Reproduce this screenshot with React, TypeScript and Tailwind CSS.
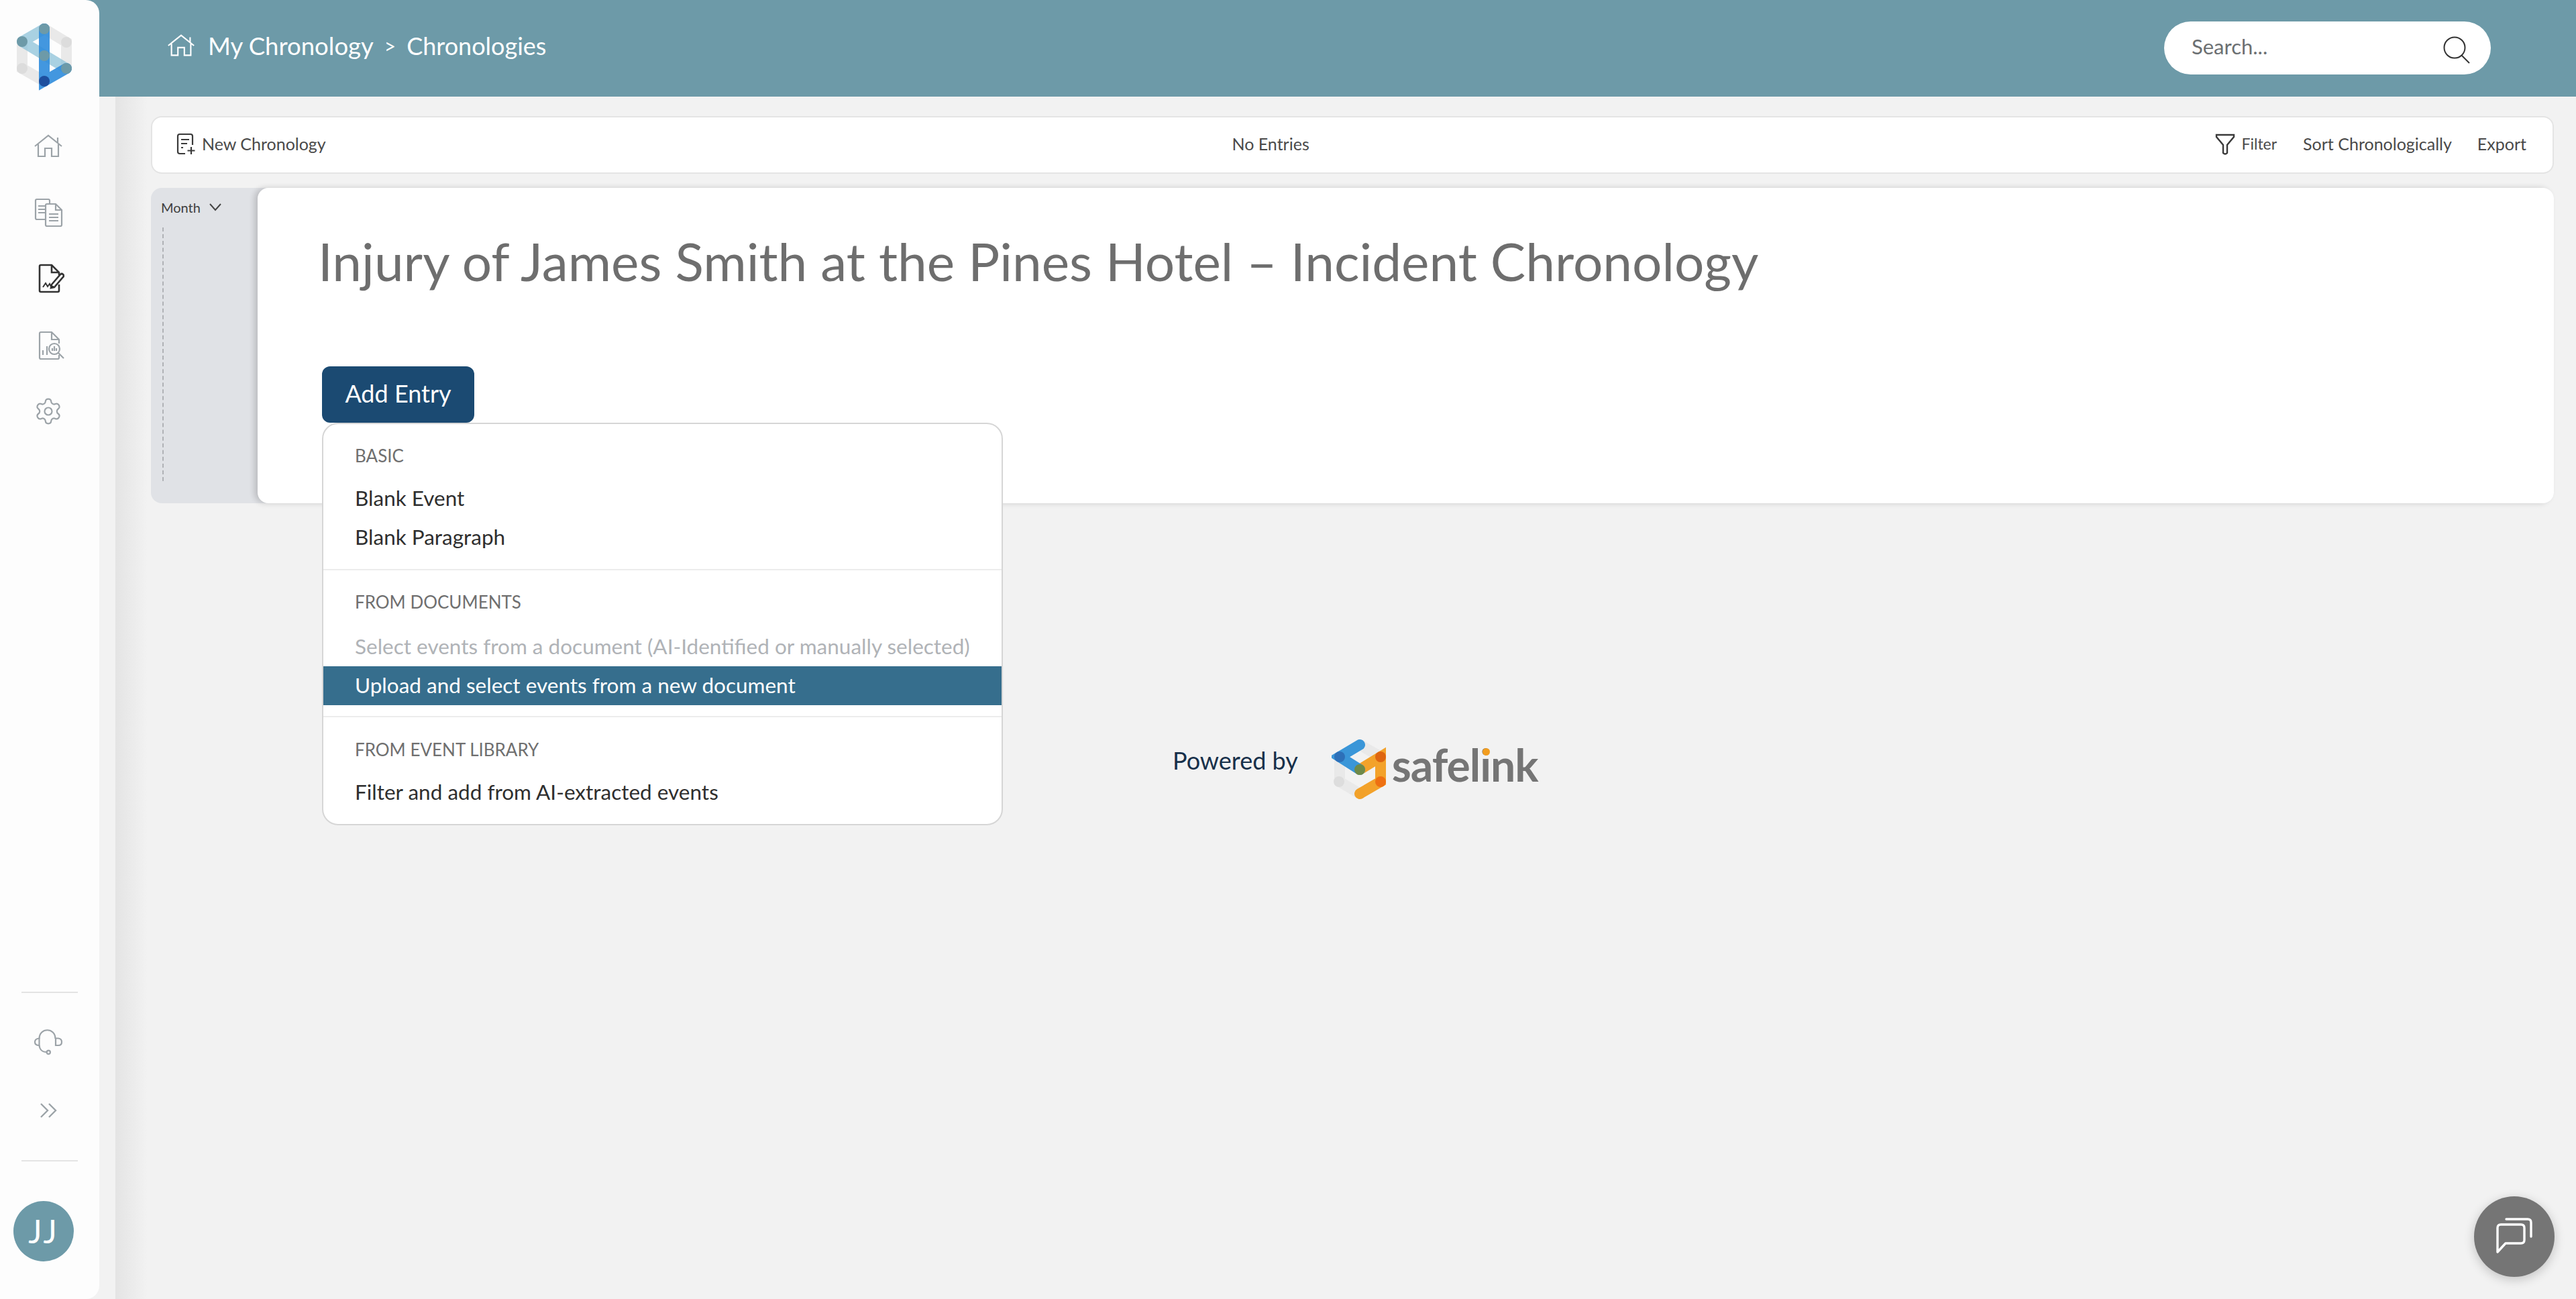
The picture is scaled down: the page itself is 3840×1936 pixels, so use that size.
import { Settings } from "lucide-react";

const FONT = "font-['Lato','Noto_Sans',sans-serif]";

function BrandLogo() {
  return (
    <svg width="130" height="150" viewBox="0 0 130 150" fill="none" strokeLinecap="round" className="mt-[17px] ml-[2px]">
      <g strokeWidth="16">
        <path d="M64 26 L97 46 V85 M31 45 V85 L64 104" stroke="#d9d9d9" strokeOpacity="0.55" />
        <path d="M31 45 L64 26 M31 45 L97 85" stroke="#8cc1d8" strokeOpacity="0.75" />
        <path d="M64 26 V104 L97 85" stroke="#2f8cdc" strokeOpacity="0.9" />
      </g>
      <circle cx="64" cy="26" r="8" fill="#6d9aa8" />
      <circle cx="31" cy="45" r="8" fill="#6d9aa8" />
      <circle cx="64" cy="66" r="8" fill="#6d9aa8" />
      <circle cx="97" cy="85" r="8" fill="#6d9aa8" />
      <circle cx="64" cy="104" r="8" fill="#1e4f9e" />
      <circle cx="97" cy="46" r="8" fill="#dcdcdc" />
      <circle cx="31" cy="85" r="8" fill="#dcdcdc" />
    </svg>
  );
}

function HomeIcon({ className }: { className?: string }) {
  return (
    <svg viewBox="0 0 48 48" fill="none" stroke="currentColor" strokeWidth="2.2" className={className}>
      <path d="M4 24 L24 8 L44 24 M38 11 V19 M9 21 V39 H19 V27 H29 V39 H39 V21" />
    </svg>
  );
}

function DocsIcon() {
  return (
    <svg viewBox="0 0 48 48" fill="none" stroke="#9ca3a8" strokeWidth="2.2" className="w-[48px] h-[48px]">
      <path d="M20 34 H7 Q5 34 5 32 V6 Q5 4 7 4 H24 Q26 4 26 6 V10" />
      <path d="M9 14 H20 M9 19 H20 M9 24 H20" />
      <path d="M22 11 H35 L44 20 V42 Q44 44 42 44 H22 Q20 44 20 42 V13 Q20 11 22 11 Z M35 11 V20 H44" />
      <path d="M25 26 H39 M25 31 H39 M25 36 H39" />
    </svg>
  );
}

function SignIcon() {
  return (
    <svg viewBox="0 0 48 48" fill="none" stroke="#333333" strokeWidth="2.6" className="w-[48px] h-[48px]">
      <path d="M40 32 V41 Q40 43 38 43 H13 Q11 43 11 41 V5 Q11 3 13 3 H29 L40 14 V18 M29 3 V14 H40" />
      <path d="M16 36 L20 30 L23 35 L26 31 L28 35 H32" strokeWidth="2" />
      <path d="M29 32 L42 17 Q44 15 46 17 Q48 19 46 21 L33 36 L28 37 Z" />
    </svg>
  );
}

function ReportIcon() {
  return (
    <svg viewBox="0 0 48 48" fill="none" stroke="#9ca3a8" strokeWidth="2.2" className="w-[48px] h-[48px] mt-[2px]">
      <path d="M40 37 V41 Q40 43 38 43 H13 Q11 43 11 41 V5 Q11 3 13 3 H29 L40 14 V20 M29 3 V14 H40" />
      <path d="M16 37 V30 M22 37 V24" />
      <circle cx="33" cy="28" r="8" />
      <path d="M30 31 V27 M33 31 V24 M36 31 V27 M39 34 L47 42" />
    </svg>
  );
}

function HeadsetIcon() {
  return (
    <svg viewBox="0 0 48 48" fill="none" stroke="#9ca3a8" strokeWidth="2.2" className="w-[48px] h-[48px]">
      <path d="M10.5 19 C10.5 2 34.5 2 34.5 19" />
      <path d="M10.5 18.5 Q4 19 4 24 Q4 29 10.5 29 Z M35 18.5 H39 Q44 19 44 24 Q44 29 39 29 H35 Z" />
      <path d="M10.5 29 C11 35 15 39 21.5 39" />
      <circle cx="24.3" cy="39.3" r="2.6" />
    </svg>
  );
}

function ChevronsIcon() {
  return (
    <svg viewBox="0 0 48 48" fill="none" stroke="#9ca3a8" strokeWidth="2.4" className="w-[48px] h-[48px]">
      <path d="M13 14 L23 24 L13 34 M25 14 L35 24 L25 34" />
    </svg>
  );
}

function SafelinkLogo() {
  return (
    <div className="flex items-center">
      <svg width="84" height="96" viewBox="0 0 84 96" fill="none" strokeLinecap="round">
        <g strokeWidth="16">
          <path d="M42 10 L73 28 M12 28 V65 L42 83" stroke="#e2e2e2" strokeOpacity="0.6" />
          <path d="M42 47 L73 28 V65 L42 83" stroke="#f29d1f" strokeOpacity="0.95" />
          <path d="M42 10 L12 28 L42 47" stroke="#3a96d8" />
        </g>
        <circle cx="12" cy="28" r="8" fill="#2d70b8" />
        <circle cx="42" cy="47" r="8" fill="#6f8a48" />
        <circle cx="73" cy="28" r="8" fill="#de6510" />
        <circle cx="73" cy="65" r="8" fill="#ee7012" />
        <circle cx="11" cy="65" r="8" fill="#dddddd" />
      </svg>
      <span className="relative ml-[6px] text-[66px] leading-none font-bold tracking-[-1px] text-[#757575] -mt-[16px]">
        safelink
        <span className="absolute left-[135px] top-[8px] w-[11px] h-[11px] rounded-full bg-[#f29d1f]" />
      </span>
    </div>
  );
}

function MenuItem({ label, className }: { label: string; className?: string }) {
  return <div className={`h-[58px] flex items-center px-[47px] text-[31.5px] ${className ?? "text-[#2f2f2f]"}`}>{label}</div>;
}

function MenuHeading({ label }: { label: string }) {
  return <div className="h-[58px] flex items-center px-[47px] text-[26px] text-[#6f6f6f]">{label}</div>;
}

export default function App() {
  return (
    <div className={`${FONT} flex h-screen w-full overflow-hidden bg-[#f2f2f2] relative`}>
      {/* Sidebar */}
      <aside className="relative z-10 w-[148px] shrink-0 flex flex-col bg-[#fdfdfd] rounded-r-[20px]">
        <div className="h-[168px] shrink-0">
          <BrandLogo />
        </div>
        <nav className="flex flex-col pr-[4px]">
          <div className="h-[99px] flex items-center justify-center"><HomeIcon className="w-[48px] h-[48px] text-[#9ca3a8]" /></div>
          <div className="h-[99px] flex items-center justify-center"><DocsIcon /></div>
          <div className="h-[99px] flex items-center justify-center"><SignIcon /></div>
          <div className="h-[99px] flex items-center justify-center"><ReportIcon /></div>
          <div className="h-[97px] flex items-center justify-center"><Settings size={44} strokeWidth={1.2} className="text-[#9ca3a8]" /></div>
        </nav>
        <div className="mt-auto">
          <div className="ml-[32px] w-[84px] h-[2px] bg-[#e4e4e4]" />
          <div className="pr-[4px] pt-[22px]">
            <div className="h-[102px] flex items-center justify-center"><HeadsetIcon /></div>
            <div className="h-[102px] flex items-center justify-center"><ChevronsIcon /></div>
          </div>
          <div className="ml-[32px] mt-[23px] w-[84px] h-[2px] bg-[#e4e4e4]" />
          <div className="ml-[20px] mt-[59px] mb-[56px] w-[90px] h-[90px] rounded-full bg-[#6d9aa8] flex items-center justify-center text-white text-[48px] tracking-[3px]">JJ</div>
        </div>
      </aside>

      {/* Main column */}
      <main className="relative flex-1 min-w-0 -ml-[24px] pl-[24px] flex flex-col">
        <header className="h-[144px] shrink-0 -ml-[24px] pl-[126px] pr-[127px] bg-[#6d9aa8] flex items-center justify-between text-white">
          <div className="flex items-center text-[36.5px] -mt-[8px]">
            <HomeIcon className="w-[46px] h-[46px] -ml-[3px] mr-[17px] text-white" />
            <span>My Chronology</span>
            <span className="mx-[16px] text-[30px]">&gt;</span>
            <span className="text-[36px]">Chronologies</span>
          </div>
          <div className="w-[487px] h-[79px] -mt-[2px] rounded-full bg-white flex items-center justify-between pl-[41px] pr-[30px]">
            <span className="text-[31px] text-[#6b6f72] -mt-[3px]">Search...</span>
            <svg width="42" height="42" viewBox="0 0 42 42" fill="none" stroke="#333" strokeWidth="2" className="mt-[6px]">
              <circle cx="18" cy="18" r="15.5" />
              <path d="M28 29 L40 41" />
            </svg>
          </div>
        </header>

        <div className="relative flex-1 pl-[77px] pr-[33px] pt-[29px]">
          {/* shadow cast by the sidebar */}
          <div className="absolute left-[24px] top-0 bottom-0 w-[48px] bg-gradient-to-r from-[#e4e4e4] to-[#f2f2f2]" />

          {/* Toolbar */}
          <div className="relative h-[86px] rounded-[16px] bg-white border-2 border-[#e4e4e4] flex items-center justify-between pl-[35px] pr-[39px] pb-[3px] text-[25px] text-[#4a4a4a]">
            <div className="flex items-center gap-[9px]">
              <svg width="30" height="34" viewBox="0 0 30 34" fill="none" stroke="#3a3a3a" strokeWidth="2.2">
                <path d="M14 31 H6 Q3 31 3 28 V5 Q3 2 6 2 H22 Q25 2 25 5 V18 M8 10 H20 M8 16 H17 M8 22 H11" />
                <path d="M23 21 V32 M17.5 26.5 H28.5" />
              </svg>
              <span>New Chronology</span>
            </div>
            <span>No Entries</span>
            <div className="flex items-center">
              <svg width="30" height="32" viewBox="0 0 30 32" fill="none" stroke="#3a3a3a" strokeWidth="2.4" className="mr-[9px]">
                <path d="M2 2 H28 V5 L18 17 V29 Q15 32 12 29 V17 L2 5 Z" />
              </svg>
              <span className="text-[23px]">Filter</span>
              <span className="ml-[39px]">Sort Chronologically</span>
              <span className="ml-[38px]">Export</span>
            </div>
          </div>

          {/* Timeline + document */}
          <div className="relative mt-[21px] h-[470px] rounded-[16px] bg-[#e0e2e6] flex">
            <div className="w-[159px] shrink-0 pl-[15px] pt-[14px]">
              <div className="flex items-center gap-[12px] text-[20px] text-[#3f3f3f]">
                <span>Month</span>
                <svg width="20" height="12" viewBox="0 0 20 12" fill="none" stroke="#444" strokeWidth="2"><path d="M2 1 L10 10 L18 1" /></svg>
              </div>
              <div className="ml-[2px] mt-[15px] h-[378px] border-l-2 border-dashed border-[#b0b2b6]" />
            </div>
            <div className="relative flex-1 rounded-[16px] bg-white shadow-[-5px_0_8px_rgba(0,0,0,0.16)] pl-[90px] pt-[59px]">
              <h1 className="text-[78.4px] leading-[100px] text-[#6e6e6e] whitespace-nowrap">
                Injury of James Smith at the Pines Hotel – Incident Chronology
              </h1>

              <div className="relative mt-[107px] ml-[6px] w-[1014px]">
                <button className="w-[227px] h-[84px] pb-[5px] rounded-[12px] bg-[#1b4a72] text-white text-[36px] flex items-center justify-center">
                  Add Entry
                </button>
                <div className="absolute left-0 top-full w-[1015px] h-[600px] rounded-[24px] bg-white border-2 border-[#d6d6d6] z-20 overflow-hidden pt-[18px]">
                  <MenuHeading label="BASIC" />
                  <div className="mt-[6px]"><MenuItem label="Blank Event" /></div>
                  <MenuItem label="Blank Paragraph" />
                  <div className="mt-[18px] h-[2px] bg-[#ececec]" />
                  <div className="mt-[18px]"><MenuHeading label="FROM DOCUMENTS" /></div>
                  <div className="mt-[9px]"><MenuItem label="Select events from a document (AI-Identified or manually selected)" className="text-[#b0b3b7]" /></div>
                  <MenuItem label="Upload and select events from a new document" className="bg-[#366e8d] text-white" />
                  <div className="mt-[16px] h-[2px] bg-[#ececec]" />
                  <div className="mt-[19px]"><MenuHeading label="FROM EVENT LIBRARY" /></div>
                  <div className="mt-[6px]"><MenuItem label="Filter and add from AI-extracted events" /></div>
                </div>
              </div>
            </div>
          </div>

          {/* Powered by */}
          <div className="relative mt-[350px] flex items-start pl-[1523px]">
            <span className="text-[36px] text-[#17304a] mt-[6px] mr-[50px]">Powered by</span>
            <SafelinkLogo />
          </div>
        </div>

        {/* Chat button */}
        <button className="absolute right-[32px] bottom-[33px] w-[120px] h-[120px] rounded-full bg-[#757575] shadow-[0_4px_16px_rgba(0,0,0,0.2)] flex items-center justify-center">
          <svg width="56" height="56" viewBox="0 0 56 56" fill="none" stroke="white" strokeWidth="3.4" strokeLinecap="round" strokeLinejoin="round">
            <path d="M16 2 H48 Q53 2 53 7 V28" />
            <path d="M8 10 H38 Q43 10 43 15 V33 Q43 38 38 38 H15 L3 51 V15 Q3 10 8 10 Z" />
          </svg>
        </button>
      </main>
    </div>
  );
}
